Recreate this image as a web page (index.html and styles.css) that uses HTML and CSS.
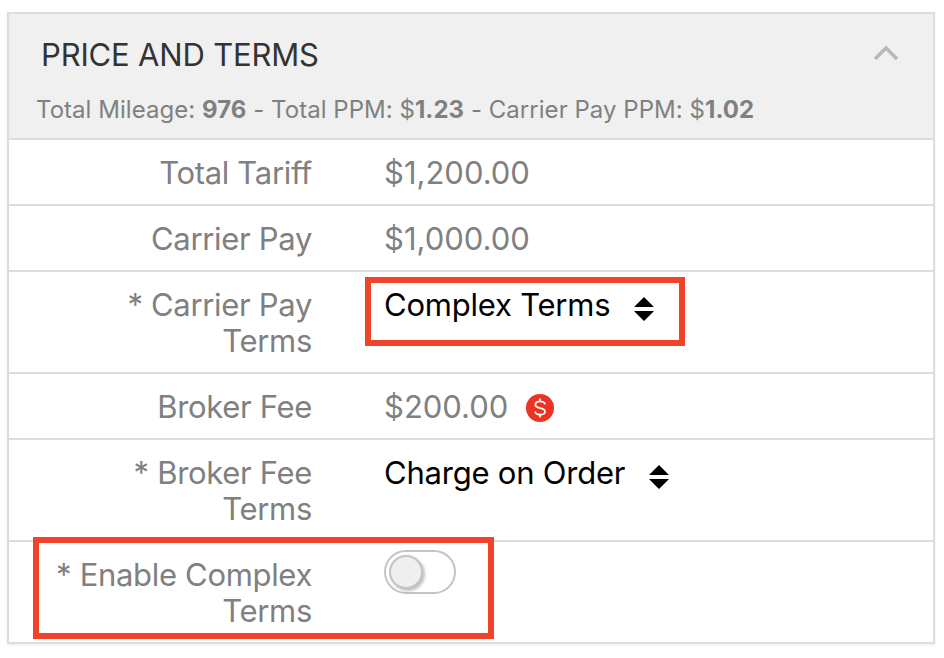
FILE: index.html
```html
<!DOCTYPE html>
<html lang="en">
<head>
<meta charset="utf-8">
<title>Price and Terms</title>
<link rel="stylesheet" href="styles.css">
</head>
<body>
<section class="card">
  <header class="card-head">
    <div class="head-top">
      <h2 class="title">PRICE AND TERMS</h2>
      <svg class="chevron" width="26" height="16" viewBox="0 0 26 16"><path d="M2 14 L13 3 L24 14" fill="none" stroke="#b8b8b8" stroke-width="3.6"/></svg>
    </div>
    <p class="summary">Total Mileage: <b>976</b> - Total PPM: $<b>1.23</b> - Carrier Pay PPM: $<b>1.02</b></p>
  </header>
  <div class="row">
    <div class="label">Total Tariff</div>
    <div class="value">$1,200.00</div>
  </div>
  <div class="row">
    <div class="label">Carrier Pay</div>
    <div class="value">$1,000.00</div>
  </div>
  <div class="row">
    <div class="label">* Carrier Pay Terms</div>
    <div class="value select">Complex Terms
      <svg class="updown" width="20" height="24" viewBox="0 0 20 24"><path d="M10 0 L20 10 H0 Z M0 14 H20 L10 24 Z" fill="#000"/></svg>
    </div>
    <div class="callout callout-select"></div>
  </div>
  <div class="row">
    <div class="label">Broker Fee</div>
    <div class="value">$200.00
      <svg class="fee" width="28" height="28" viewBox="0 0 28 28"><circle cx="14" cy="14" r="14" fill="#ea3323"/><path d="M19 10.4 C18.6 8.4 16.6 7.4 14 7.4 C11.2 7.4 9.4 8.8 9.4 10.8 C9.4 15.4 19 12.8 19 17.4 C19 19.4 17 20.6 14 20.6 C11.2 20.6 9.4 19.4 9 17.4 M14 4.4 V7.4 M14 20.6 V23.6" fill="none" stroke="#fff" stroke-width="1.7"/></svg>
    </div>
  </div>
  <div class="row">
    <div class="label">* Broker Fee Terms</div>
    <div class="value select">Charge on Order
      <svg class="updown" width="20" height="24" viewBox="0 0 20 24"><path d="M10 0 L20 10 H0 Z M0 14 H20 L10 24 Z" fill="#000"/></svg>
    </div>
  </div>
  <div class="row">
    <div class="label">* Enable Complex Terms</div>
    <div class="value"><span class="toggle"><span class="knob"></span></span></div>
    <div class="callout callout-toggle"></div>
  </div>
</section>
</body>
</html>
```
FILE: styles.css
```css
* { box-sizing: border-box; }
html, body { margin: 0; background: #fff; }
body {
  padding: 12px 0 0 7px;
  font-family: "Inter", "Liberation Sans", sans-serif;
  width: 944px;
  height: 658px;
  overflow: hidden;
}
.card {
  width: 928px;
  border: 2px solid #dddddd;
  box-shadow: 0 1px 2px rgba(0,0,0,.08);
}
.card-head {
  background: #f0f0f0;
  height: 124px;
  padding: 23px 34px 0 27px;
}
.head-top {
  display: flex;
  justify-content: space-between;
  align-items: center;
  padding-left: 5px;
  height: 36px;
}
.title {
  margin: 0;
  font-size: 31px;
  font-weight: 400;
  letter-spacing: -0.17px;
  color: #333;
  line-height: 36px;
}
.chevron { margin-top: -4px; }
.summary {
  margin: 23px 0 0;
  font-size: 24px;
  line-height: 28px;
  letter-spacing: 0.04px;
  color: #808080;
  white-space: nowrap;
}
.row {
  position: relative;
  display: flex;
  border-top: 2px solid #dddddd;
  padding: 15px 0 13px;
  font-size: 31px;
  line-height: 36px;
  color: #808080;
}
.label {
  width: 303px;
  padding-left: 34px;
  text-align: right;
  letter-spacing: -0.32px;
}
.value {
  margin-left: 72px;
  display: flex;
  align-items: center;
  align-self: flex-start;
  height: 36px;
}
.select { color: #000; letter-spacing: -0.22px; }
.updown { margin-left: 24px; margin-top: 8px; }
.fee { margin-left: 18px; margin-top: 2px; }
.toggle {
  display: block;
  width: 72px;
  height: 44px;
  margin-top: -6px;
  border: 2px solid #c4c4c4;
  border-radius: 22px;
  padding: 3px;
  background: #fff;
}
.knob {
  display: block;
  width: 34px;
  height: 34px;
  border-radius: 50%;
  background: #efefef;
  border: 2px solid #c4c4c4;
  box-shadow: 2px 2px 3px rgba(0,0,0,.25);
}
.callout {
  position: absolute;
  border: 6px solid #f04328;
  pointer-events: none;
}
.callout-select { left: 356px; top: 5px; width: 320px; height: 69px; }
.callout-toggle { left: 24px; top: -5px; width: 461px; height: 102px; }
```
